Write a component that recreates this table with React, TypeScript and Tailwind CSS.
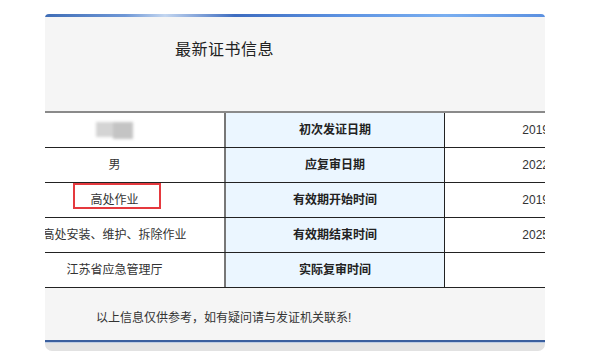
const rows = [
  { left: '', label: '初次发证日期', value: '2019-06-28', blur: true },
  { left: '男', label: '应复审日期', value: '2022-06-28' },
  { left: '高处作业', label: '有效期开始时间', value: '2019-06-28' },
  { left: '高处安装、维护、拆除作业', label: '有效期结束时间', value: '2025-06-27' },
  { left: '江苏省应急管理厅', label: '实际复审时间', value: '' },
];

export default function App() {
  return (
    <div
      className="relative w-[606px] h-[351px] bg-white pt-[14px]"
      style={{ fontFamily: '"Liberation Sans", "Noto Sans CJK SC", sans-serif' }}
    >
      <div className="ml-[45px] w-[500px] overflow-hidden rounded-t-[4px] rounded-b-[7px]">
        <div className="h-[3px] bg-[linear-gradient(to_right,#3f6db6_0%,#6e97d6_16%,#c3d6f0_24%,#3d6cc0_38%,#5d93e2_60%,#79aef0_80%,#5b90e0_100%)]" />
        <div className="h-[94px] bg-[#f5f5f5] pl-[130px] pt-[23px]">
          <h1 className="text-[16px] leading-[20px] text-[#222] tracking-[0.5px]">最新证书信息</h1>
        </div>

        <div className="-ml-[40px] w-[662px] border-t-2 border-[#8a8a8a] bg-white text-[12px] text-[#333]">
          {rows.map((r, i) => (
            <div key={i} className="flex h-[35px] border-b border-[#222]">
              <div className="w-[221px] flex items-center justify-center border-r-2 border-[#777] whitespace-nowrap">
                {r.blur ? (
                  <div className="flex blur-[1.5px]">
                    <div className="w-[17px] h-[15px] bg-[#d4d4d4]" />
                    <div className="w-[20px] h-[17px] bg-[#c4c4c4]" />
                  </div>
                ) : (
                  r.left
                )}
              </div>
              <div className="w-[219px] flex items-center justify-center border-r border-[#222] bg-[#ebf6ff] font-bold text-[#222]">
                {r.label}
              </div>
              <div className="w-[216px] flex items-center justify-center">{r.value}</div>
            </div>
          ))}
        </div>

        <div className="h-[52px] bg-[#f5f5f5] pl-[51px] pt-[22px] text-[12px] leading-[16px] text-[#333]">
          以上信息仅供参考，如有疑问请与发证机关联系!
        </div>
        <div className="h-[2px] bg-[#3a5f9e]" />
        <div className="h-[1px] bg-[#bccbe2]" />
        <div className="h-[8px] bg-[#e2e2e2]" />
      </div>

      <div className="absolute left-[73px] top-[183px] w-[88px] h-[26px] border-2 border-[#e5393e]" />
    </div>
  );
}
